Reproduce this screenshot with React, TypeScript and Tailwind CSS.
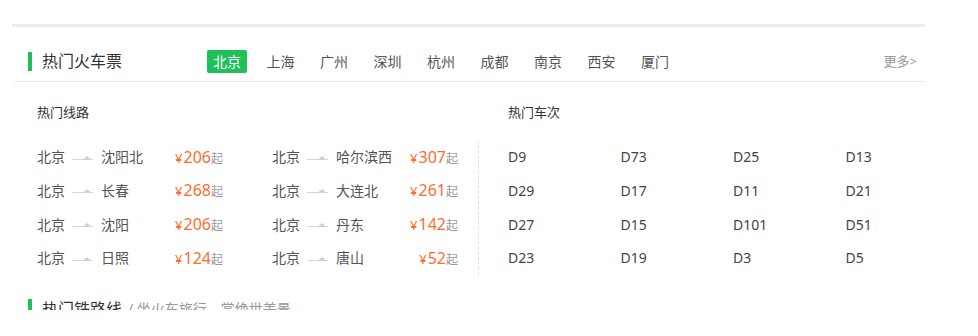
import React from "react";

const tabs = ["北京", "上海", "广州", "深圳", "杭州", "成都", "南京", "西安", "厦门"];

const routes: [string, string][] = [
  ["沈阳北", "206"],
  ["哈尔滨西", "307"],
  ["长春", "268"],
  ["大连北", "261"],
  ["沈阳", "206"],
  ["丹东", "142"],
  ["日照", "124"],
  ["唐山", "52"],
];

const trains = [
  "D9", "D73", "D25", "D13",
  "D29", "D17", "D11", "D21",
  "D27", "D15", "D101", "D51",
  "D23", "D19", "D3", "D5",
];

function Arrow() {
  return (
    <svg width="21" height="8" viewBox="0 0 21 8" className="shrink-0">
      <line x1="0" y1="6.5" x2="21" y2="6.5" stroke="#d6d6d6" strokeWidth="1" />
      <polygon points="11,6.5 15,3 19,6.5" fill="#cfcfcf" />
    </svg>
  );
}

function RouteItem({ dest, price }: { dest: string; price: string }) {
  return (
    <div className="flex items-center h-[33.67px] w-[186px] text-[14px] text-[#555]">
      <span className="w-[28px]">北京</span>
      <span className="ml-[7px]">
        <Arrow />
      </span>
      <span className="ml-[8px]">{dest}</span>
      <span className="ml-auto flex items-baseline">
        <span className="text-[13px] text-[#ff6b2e] mr-[1px]">¥</span>
        <span className="text-[16px] text-[#ff6b2e]">{price}</span>
        <span className="text-[12px] text-[#999]">起</span>
      </span>
    </div>
  );
}

export default function App() {
  return (
    <div
      className="w-[978px] h-[310px] overflow-hidden bg-white"
      style={{ fontFamily: '"Noto Sans", "Noto Sans CJK SC", sans-serif' }}
    >
      <div className="pt-[24px]">
        <div className="ml-[12px] w-[913px] h-[3px] bg-[#ededed]" />
      </div>

      <div className="ml-[15px] w-[910px]">
        {/* header */}
        <div className="pt-[23px] pb-[8px] border-b border-[#e5e5e5] flex items-center h-[55px]">
          <div className="ml-[13px] w-[4px] h-[19px] bg-[#1fbf5a]" />
          <div className="ml-[10px] w-[165px] text-[16px] leading-[23px] text-[#333]">热门火车票</div>
          <div className="flex gap-[13.5px]">
            {tabs.map((t, i) => (
              <div
                key={t}
                className={
                  i === 0
                    ? "w-[40px] h-[23px] rounded-[2px] bg-[#1fbf5a] text-white text-[14px] leading-[23px] text-center"
                    : "w-[40px] h-[23px] text-[#555] text-[14px] leading-[23px] text-center"
                }
              >
                {t}
              </div>
            ))}
          </div>
          <div className="ml-auto mr-[8px] text-[13px] text-[#999] leading-[23px]">更多&gt;</div>
        </div>

        {/* body */}
        <div className="flex pt-[21px]">
          <div className="w-[463px] shrink-0 pl-[22px]">
            <div className="text-[13px] leading-[18px] text-[#333] h-[18px]">热门线路</div>
            <div className="mt-[19px] grid grid-cols-[186px_186px] gap-x-[49px]">
              {routes.map(([d, p], i) => (
                <RouteItem key={i} dest={d} price={p} />
              ))}
            </div>
          </div>
          <div className="w-[447px] shrink-0">
            <div className="pl-[30px] text-[13px] leading-[18px] text-[#333] h-[18px]">热门车次</div>
            <div className="mt-[19px] border-l border-dashed border-[#e2e2e2] pl-[29px] grid grid-cols-[112.5px_112.5px_112.5px_80px]">
              {trains.map((t) => (
                <div key={t} className="h-[33.67px] flex items-center text-[14px] text-[#444]">
                  {t}
                </div>
              ))}
            </div>
          </div>
        </div>

        {/* next section */}
        <div className="mt-[24px] flex items-center">
          <div className="ml-[13px] w-[4px] h-[19px] bg-[#1fbf5a]" />
          <div className="ml-[10px] text-[16px] leading-[20px] text-[#333]">热门铁路线</div>
          <div className="ml-[6px] text-[14px] leading-[20px] text-[#999]">/ 坐火车旅行，赏绝世美景</div>
        </div>
      </div>
    </div>
  );
}
